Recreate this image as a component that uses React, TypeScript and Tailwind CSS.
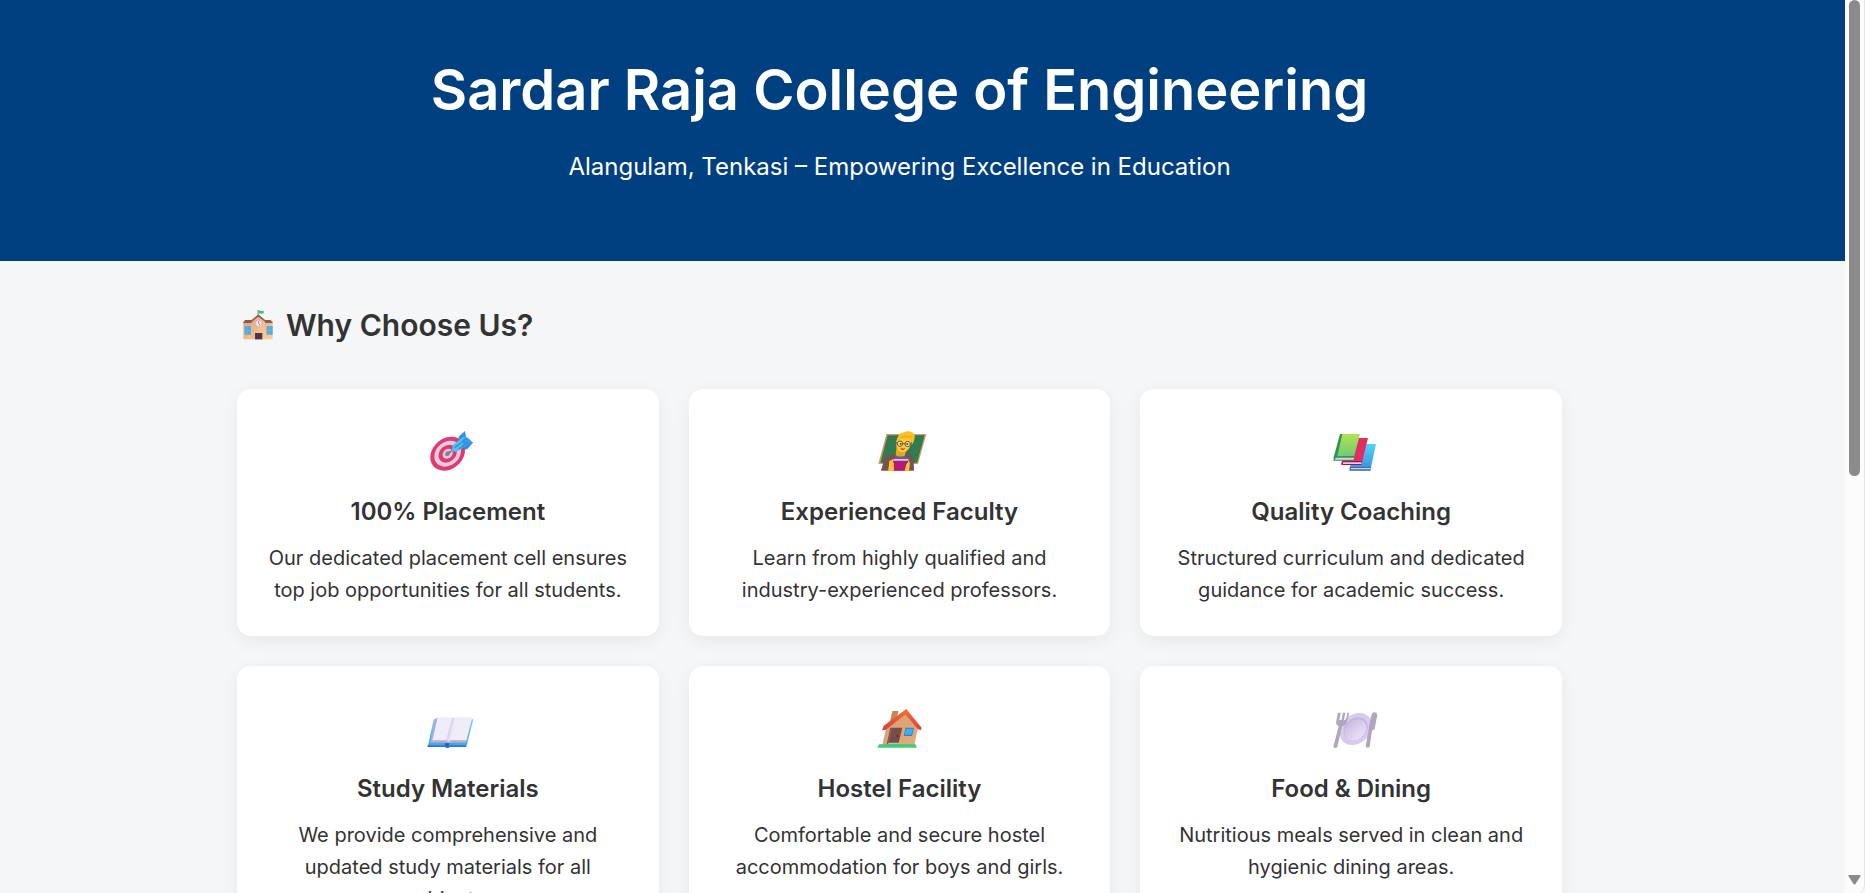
import type { ReactNode } from "react";

const SchoolIcon = () => (
  <svg aria-hidden="true" viewBox="0 0 96 96" className="h-8 w-8 shrink-0">
    <defs>
      <linearGradient id="schoolWall" x1="0" x2="1" y1="0" y2="1">
        <stop offset="0" stopColor="#e3a685" />
        <stop offset="1" stopColor="#ffcf96" />
      </linearGradient>
    </defs>
    <path d="M4 38h88v53H4z" fill="url(#schoolWall)" />
    <path d="M3 42 9 33h30v9zM93 42l-7-9H55v9z" fill="#8b5a51" />
    <path d="M29 91V36l20-18 20 18v55z" fill="url(#schoolWall)" />
    <path d="M25 42v-6l24-20 24 20v6L49 23z" fill="#935f55" />
    <path d="M47 3h3v16h-3z" fill="#6b7280" />
    <path d="M50 4q7 4 15 1v8q-8 3-15-1z" fill="#36c275" />
    <circle cx="50" cy="43" r="9" fill="#d8cae3" />
    <circle cx="50" cy="43" r="7" fill="#f6effa" />
    <path d="M50 37v7l4 4" fill="none" stroke="#574368" strokeWidth="2" />
    <path d="M39 72h22v19H39z" fill="#46384f" />
    <path d="M8 51h19v26H8zM74 51h18v26H74z" fill="#45b0ea" />
    <path d="M17 51v26M8 64h19M83 51v26M74 64h18" stroke="#d3a188" strokeWidth="1.5" />
  </svg>
);

const TargetIcon = () => (
  <svg aria-hidden="true" viewBox="-6 0 240 180" className="h-[60px] w-20">
    <g transform="matrix(1 0 -.22 1 113 101)">
      <circle r="51" fill="#e5386b" />
      <circle r="39" fill="#d9cfe6" />
      <circle r="27" fill="#e73768" />
      <circle r="15" fill="#d6cbe2" />
      <circle r="7" fill="#8b7a9c" />
    </g>
    <path d="m117 100 12-12" stroke="#786f8c" strokeWidth="4" />
    <path d="m147 62-1-12 19-17 3 17-10 17z" fill="#2f8fe9" />
    <path d="m163 80 10-13 17 0-18 20-13 3z" fill="#2b86e4" />
    <path d="m124 94 5-19 31-25 17 12-17 20-20 13z" fill="#4fc0f0" />
    <path d="m158 60 11-9 9 6 9 10-15 10-14 3z" fill="#379be9" />
    <path d="m134 83 32-25M146 87l28-20" stroke="#2c90df" strokeWidth="4" />
  </svg>
);

const TeacherIcon = () => (
  <svg aria-hidden="true" viewBox="0 0 240 180" className="h-[60px] w-20">
    <path d="M82 42h120l-25 90H58z" fill="#d09a68" />
    <path d="M86 46h111l-23 82H64z" fill="#317b50" />
    <path d="m66 152 9-32q5-16 25-17h42q20 1 22 19l1 30z" fill="#76534e" />
    <path d="m88 152 4-26q2-8 10-8h35q15 0 15 12l-2 22z" fill="#fbb917" />
    <path d="M112 85h32l-7 22q-18 8-27-2z" fill="#eaa51b" />
    <path d="M114 56q8-14 25-14 22 1 19 22l-6 18q-8 16-23 15-17-3-17-20z" fill="#ffc83a" />
    <path d="M112 70q-2-9 6-17-1-13 14-15 7-6 18-4 20 4 17 20-2 13-9 22l-1-20q-11 4-21-1-17 0-20 15z" fill="#ffc01d" />
    <path d="M124 52q10 2 16-4 8 5 20 2" stroke="#eca322" strokeWidth="3" fill="none" />
    <g fill="#fbdc91" stroke="#4d4740" strokeWidth="2.500">
      <circle cx="123" cy="71" r="8" />
      <circle cx="146" cy="72" r="8" />
      <path d="M131 71h7m16 0 4-2m-43 1-4-2" />
    </g>
    <circle cx="125" cy="71" r="3" fill="#624229" />
    <circle cx="145" cy="72" r="3" fill="#624229" />
    <path d="M124 83q8 5 15 1-4 7-9 6-5-1-6-7" fill="#df2638" />
    <path d="M106 110h43l-2 10h-44z" fill="#5961a1" />
    <path d="M104 117h44v8h-46z" fill="#d6cae8" />
    <path d="M102 122h46l-7 30h-37z" fill="#b41b78" />
    <path d="M91 123q10-3 14 8l-1 21H88zM137 152l5-19q3-8 10-5l-2 24z" fill="#ffc331" />
  </svg>
);

const BooksIcon = () => (
  <svg aria-hidden="true" viewBox="-12 0 240 180" className="h-[60px] w-20">
    <defs>
      <linearGradient id="greenCover" x1="0" x2="0" y1="0" y2="1">
        <stop stopColor="#b0e64e" />
        <stop offset="1" stopColor="#68c77b" />
      </linearGradient>
      <linearGradient id="blueCover" x1="0" x2="0" y1="0" y2="1">
        <stop stopColor="#50d5f8" />
        <stop offset="1" stopColor="#3c91dc" />
      </linearGradient>
    </defs>
    <path d="M126 72h57l-15 70-65 4z" fill="url(#blueCover)" />
    <path d="m105 142 63-1-1 11h-64z" fill="#246db7" />
    <path d="M108 144h59v4h-60z" fill="#d8d4f6" />
    <path d="M102 54h57l-18 73-62 4z" fill="#e12d62" />
    <path d="m81 124 61-1-3 12H79z" fill="#a90e50" />
    <path d="M84 127h56l-1 5H84z" fill="#e4c9e8" />
    <path d="M78 42h57l-18 69-61 5z" fill="url(#greenCover)" />
    <path d="M75 42h7L67 109l-12 7z" fill="#32934e" />
    <path d="m59 109 60-1-3 14H55z" fill="#358c60" />
    <path d="M62 113h55l-1 6H60z" fill="#d6d7e5" />
  </svg>
);

const OpenBookIcon = () => (
  <svg aria-hidden="true" viewBox="-6 -9 240 180" className="h-[60px] w-20">
    <defs>
      <linearGradient id="bookCover" x1="0" x2="0" y1="0" y2="1">
        <stop stopColor="#73d6f2" />
        <stop offset="1" stopColor="#32a5ed" />
      </linearGradient>
    </defs>
    <path d="M71 58h119l-21 83h-50q-7 7-14 0H53z" fill="url(#bookCover)" />
    <path d="M53 136h115v5h-49q-7 7-14 0H52z" fill="#3572d4" />
    <path d="m75 57 8-5-14 70h42l60-1 9-62 4 3-17 66H61z" fill="#b8a9ce" />
    <path d="M83 52h42q6-1 8 3 4-4 11-3h43l-18 70h-42q-7 0-12 5-3-5-11-5H67z" fill="#f0ecf8" />
    <path d="m126 53-18 69 7 5 18-72z" fill="#ddd5ed" />
    <path d="m134 55-17 68" stroke="#e9e2f3" strokeWidth="5" />
    <path d="M67 122h38q6 0 10 5 5-5 12-5h41" fill="none" stroke="#c4b8d8" strokeWidth="4" />
    <path d="M105 130h13l-2 7h-10z" fill="#2459ad" />
  </svg>
);

const HouseIcon = () => (
  <svg aria-hidden="true" viewBox="0 -9 240 180" className="h-[60px] w-20">
    <defs>
      <linearGradient id="houseWall" x1="0" x2="1" y1="0" y2="1">
        <stop stopColor="#d89c74" />
        <stop offset="1" stopColor="#e2ad7a" />
      </linearGradient>
      <linearGradient id="houseRoof" x1="0" x2="0" y1="0" y2="1">
        <stop stopColor="#f9702c" />
        <stop offset="1" stopColor="#db3d43" />
      </linearGradient>
    </defs>
    <path d="M100 33h18l-8 45-22 9z" fill="#c08a58" />
    <path d="m83 77 58-40 37 41-12 57H70z" fill="url(#houseWall)" />
    <path d="m142 27 46 56-3 8-9-4-37-44-58 46-12 2 5-14z" fill="url(#houseRoof)" />
    <path d="M94 83h36l-12 50H83z" fill="#794c49" />
    <path d="m97 86-11 47" stroke="#966454" strokeWidth="3" />
    <circle cx="115" cy="108" r="3" fill="#402d38" />
    <path d="M140 83h25l-6 25h-25z" fill="#347fce" />
    <path d="M142 86h20l-5 18h-20z" fill="#3baff1" />
    <path d="M89 128h32l-1 5H87z" fill="#b9bfc3" />
    <path d="m60 133 59-1 50 1 5 10H55z" fill="#42cb78" />
  </svg>
);

const DiningIcon = () => (
  <svg aria-hidden="true" viewBox="-12 -9 240 180" className="h-[60px] w-20">
    <defs>
      <linearGradient id="plateCenter" x1="0" x2="1" y1="0" y2="1">
        <stop stopColor="#c7b6df" />
        <stop offset="1" stopColor="#eee7f9" />
      </linearGradient>
    </defs>
    <g transform="matrix(1 0 -.22 1 122 87)">
      <circle r="48" fill="#d9c9ef" />
      <circle r="35" fill="#c6b3df" />
      <circle cy="3" r="32" fill="url(#plateCenter)" />
    </g>
    <path d="M69 38h8l-4 22h6l5-22h7l-4 22h6l4-22h6l-8 31q-4 9-14 10l-14 62q-8 7-12-1l16-62q-10-5-7-16z" fill="#b0a6bf" />
    <path d="M176 37q10-1 11 7l-8 43-8 5-7 48q-5 6-12 0l13-76q4-25 11-27" fill="#b0a6bf" />
  </svg>
);

interface Feature {
  icon: ReactNode;
  title: string;
  text: string;
}

const features: Feature[] = [
  { icon: <TargetIcon />, title: "100% Placement", text: "Our dedicated placement cell ensures top job opportunities for all students." },
  { icon: <TeacherIcon />, title: "Experienced Faculty", text: "Learn from highly qualified and industry-experienced professors." },
  { icon: <BooksIcon />, title: "Quality Coaching", text: "Structured curriculum and dedicated guidance for academic success." },
  { icon: <OpenBookIcon />, title: "Study Materials", text: "We provide comprehensive and updated study materials for all subjects." },
  { icon: <HouseIcon />, title: "Hostel Facility", text: "Comfortable and secure hostel accommodation for boys and girls." },
  { icon: <DiningIcon />, title: "Food & Dining", text: "Nutritious meals served in clean and hygienic dining areas." },
];

const FeatureCard = ({ icon, title, text }: Feature) => (
  <article className="flex flex-col items-center rounded-[14px] bg-white px-[30px] pt-[31px] pb-[30px] text-center shadow-[0_5px_20px_rgba(0,0,0,0.06)]">
    {icon}
    <h3 className="mt-3 text-2xl leading-10 font-semibold">{title}</h3>
    <p className="mt-[10px] text-[20px] leading-8">{text}</p>
  </article>
);

const ScrollTrack = () => (
  <div aria-hidden="true" className="flex w-5 shrink-0 flex-col items-center justify-between rounded-br-lg border-r border-[#e5e5e5] bg-[#fcfcfc] pb-2">
    <div className="h-[476px] w-[11px] rounded-full bg-[#8b8b8b]" />
    <svg viewBox="0 0 13 10" className="h-[10px] w-[13px]">
      <path d="M1 0h11q1 0 .6 1L7.500 9q-1 1-2 0L.4 1Q0 0 1 0" fill="#8b8b8b" />
    </svg>
  </div>
);

export default function App() {
  return (
    <div className="flex h-screen overflow-hidden bg-[#f4f6f8] font-['Inter',sans-serif] text-[#333333]">
      <div className="min-w-0 flex-1 overflow-hidden">
        <header className="bg-[#004080] pt-[45px] pr-[46px] pb-[75px] text-center text-white">
          <h1 className="text-[56px] leading-[90px] font-semibold">Sardar Raja College of Engineering</h1>
          <p className="mt-3 text-2xl leading-[39px]">Alangulam, Tenkasi – Empowering Excellence in Education</p>
        </header>
        <main className="pt-10 pr-[46px]">
          <section className="mx-auto max-w-[1325px]">
            <h2 className="flex items-center gap-3 pl-[5px] text-[30px] leading-[48px] font-semibold">
              <SchoolIcon />
              Why Choose Us?
            </h2>
            <div className="mt-10 grid grid-cols-3 gap-[30px]">
              {features.map((feature) => (
                <FeatureCard key={feature.title} {...feature} />
              ))}
            </div>
          </section>
        </main>
      </div>
      <ScrollTrack />
    </div>
  );
}
